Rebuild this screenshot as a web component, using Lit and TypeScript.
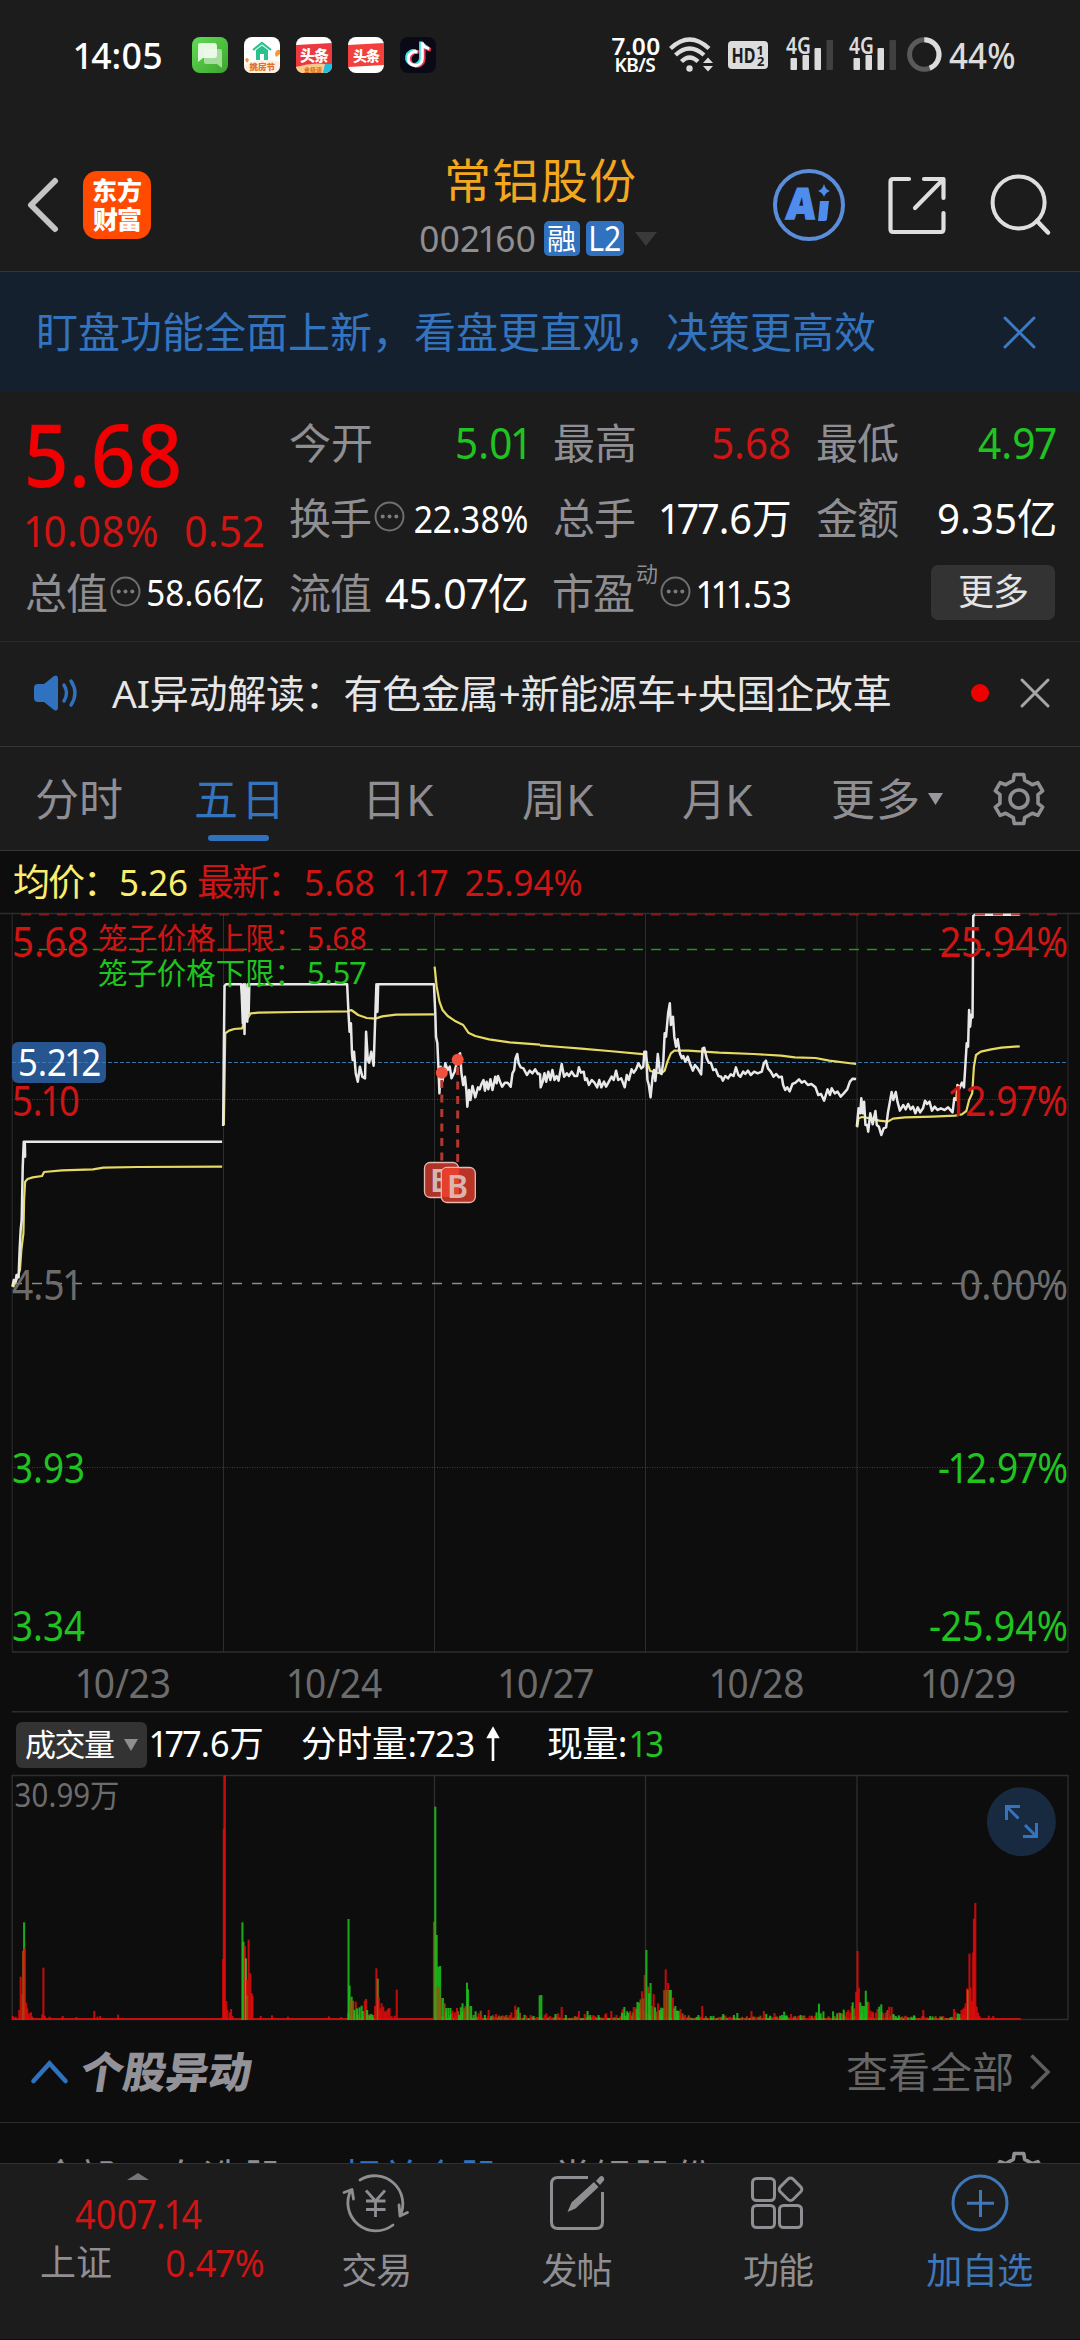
import { LitElement, html, svg, css } from "lit";
import { customElement } from "lit/decorators.js";

const FONT = '"Noto Sans", "Noto Sans CJK SC", sans-serif';

/* label whose visible glyphs span exactly `w` pixels */
const fit = (text: string, w: number, cls = "") => html`<span class="fit ${cls}" data-w=${w}>${text}</span>`;

function gearPath(cx: number, cy: number, ro: number, ri: number) {
  const p: string[] = [];
  const at = (r: number, deg: number) => {
    const a = (deg * Math.PI) / 180;
    return `${(cx + r * Math.cos(a)).toFixed(2)} ${(cy + r * Math.sin(a)).toFixed(2)}`;
  };
  for (let k = 0; k < 6; k++) {
    const a = -90 + k * 60;
    p.push(`${k ? "L" : "M"}${at(ri, a - 17)}L${at(ro, a - 11)}L${at(ro, a + 11)}L${at(ri, a + 17)}Q${at(ri * 0.98, a + 30)} ${at(ri, a + 43)}`);
  }
  return p.join("") + "Z";
}

const gear = svg`<path d=${gearPath(27, 27, 25, 19.5)} fill="none" stroke="#8e8e93" stroke-width="3.6" stroke-linejoin="round"/>
  <circle cx="27" cy="27" r="9" fill="none" stroke="#8e8e93" stroke-width="3.6"/>`;

/* price traces; each panel covers half of the chart width */
const PRICE_L = [
  "36,1220 40,1200 45,1205 48,1185 54,1192 57,1110 60,1050 63,1020 66,860 69,785 73,830 72,785 645,785",
  "648,738 650,500 652,318 656,313 700,313 702,345 705,430 707,313 710,462 712,313 715,390 718,425 720,313 722,400 724,313 1008,313 1012,400 1015,455 1019,430 1022,520 1024,540 1028,515 1033,580 1039,605 1045,560 1052,590 1060,595 1063,455 1068,540 1072,548 1078,515 1082,540 1085,557 1090,400 1093,313 1096,395 1098,313 1101,313 1260,313 1264,400 1266,470 1270,490 1273,560 1276,640 1280,560 1285,603 1293,550 1300,570 1306,560 1311,595 1320,575 1326,550 1330,528 1336,520 1340,580 1345,615 1350,590 1354,630 1357,680 1362,630 1366,660 1372,618 1380,652 1388,622 1393,628 1398,612 1404,600 1408,632 1413,605 1418,628 1424,598 1430,630 1438,590 1442,610 1446,588 1452,605 1458,620 1466,608 1474,608 1483,620 1488,580 1493,570 1497,535 1502,522 1506,550 1512,562 1520,565 1530,585 1538,572 1546,580 1554,568 1562,582 1568,580",
];
const AVG_L = [
  "38,1222 48,1200 58,1170 62,1110 68,1060 70,960 73,905 80,897 95,892 122,888 128,876 180,871 270,868 300,863 400,861 645,860",
  "650,735 654,460 665,452 680,447 703,445 708,430 716,420 728,400 750,398 860,396 1010,394 1020,390 1040,405 1065,414 1090,416 1110,409 1150,404 1260,403",
  "1262,260 1268,320 1276,365 1285,390 1300,408 1320,422 1345,435 1360,458 1380,468 1420,478 1480,487 1568,494",
];
const PRICE_R = [
  "0,580 2,622 8,605 13,580 18,605 24,575 30,600 36,570 42,600 48,588 54,602 63,552 70,590 78,580 84,588 92,575 100,588 108,588 113,562 119,578 127,575 131,600 136,595 142,615 150,600 158,608 166,622 172,600 178,622 186,605 192,620 200,605 208,590 214,600 221,572 227,600 236,595 246,622 252,585 258,600 266,568 272,578 279,568 286,550 294,565 300,560 303,515 308,515 312,600 316,615 321,652 327,590 331,570 335,603 339,560 342,522 348,575 353,582 358,545 362,460 366,470 372,400 377,370 380,435 386,410 390,470 395,500 400,478 406,520 412,535 416,528 422,545 429,530 436,552 444,572 450,555 458,565 468,583 472,505 477,503 484,535 490,548 496,548 503,570 510,568 518,588 526,590 531,602 538,588 546,595 554,583 562,588 569,562 576,585 582,590 590,575 596,582 604,572 612,585 622,575 632,580 644,575 650,550 656,542 662,565 670,575 678,590 686,582 694,592 702,590 706,615 712,630 718,622 725,634 733,612 742,608 752,598 760,608 768,603 778,615 788,612 800,622 808,645 816,642 825,662 835,628 842,645 847,625 856,640 864,635 873,650 882,640 892,628 900,605 908,596 918,597",
  "920,740 925,685 930,700 933,655 937,700 941,665 945,735 950,735 953,755 959,700 966,733 974,693 978,735 984,740 991,765 998,745 1005,742 1010,700 1016,665 1021,636 1026,660 1033,636 1038,665 1045,692 1055,675 1062,688 1069,672 1076,688 1083,680 1090,700 1097,682 1104,697 1112,685 1118,662 1124,672 1131,665 1138,692 1146,680 1154,690 1164,685 1175,690 1185,682 1198,697 1203,655 1209,660 1212,615 1218,625 1225,608 1231,622 1234,575 1239,490 1243,500 1246,390 1249,440 1252,405 1256,412 1258,108 1264,104 1393,104",
];
const AVG_R = [
  "0,496 60,501 120,506 200,513 306,523 312,550 320,573 340,578 352,580 362,572 370,545 380,520 390,512 430,512 520,518 620,522 700,527 740,532 800,534 840,542 918,552",
  "921,742 925,715 935,711 960,715 985,722 1010,725 1025,716 1060,712 1140,710 1205,707 1225,703 1238,693 1246,660 1255,640 1260,560 1266,525 1280,515 1310,508 1340,503 1393,499",
];

type Bar = [number, number, string];
const R = "#e00c0c", G = "#1cc41c", M = "#8f5a10";
const VOL_L: Bar[] = [
  [60, 650, R], [64, 702, R], [70, 487, G], [67, 573, "#a04a10"], [72, 565, R], [76, 728, R], [79, 745, R], [84, 760, R], [90, 757, R], [94, 770, R], [37, 768, R], [45, 770, R], [56, 750, R],
  [126, 623, R], [123, 763, R], [130, 767, R], [144, 770, R], [182, 768, R], [222, 771, R], [274, 753, R], [283, 770, R], [291, 768, R], [343, 764, R],
  [648, 597, R], [650, 206, R], [653, 46, R], [657, 723, R], [660, 750, R], [667, 757, R], [671, 747, R], [675, 768, R],
  [704, 487, G], [707, 545, G], [711, 558, R], [714, 595, "#5fae3a"], [717, 660, R], [718, 706, "#6a7a10"], [722, 539, R], [727, 640, R], [731, 700, R], [733, 708, R],
  [757, 768, R], [790, 766, R], [836, 770, R], [955, 769, R], [991, 771, R],
  [1012, 477, G], [1015, 677, G], [1021, 710, G], [1018, 722, M], [1025, 722, M], [1033, 725, R], [1029, 750, G], [1037, 745, G], [1044, 742, G], [1050, 737, G], [1054, 753, G], [1059, 722, R], [1063, 717, R], [1066, 750, G], [1073, 766, G],
  [1089, 738, R], [1093, 625, R], [1097, 656, "#6a8a18"], [1100, 712, R], [1104, 745, R], [1108, 730, R], [1113, 740, R], [1118, 755, R], [1122, 752, R], [1127, 746, R], [1131, 744, R], [1137, 768, R], [1146, 767, R], [1152, 689, R],
  [1260, 485, "#a03a10"], [1264, 140, G], [1268, 525, G], [1273, 620, G], [1278, 618, G], [1270, 680, M], [1275, 682, M], [1280, 714, M], [1286, 714, G], [1291, 730, M], [1296, 744, G], [1302, 744, G], [1308, 744, G], [1314, 752, R], [1321, 757, R], [1327, 744, R], [1333, 765, G], [1338, 742, G], [1343, 730, G], [1347, 745, M], [1356, 668, G], [1359, 688, G], [1352, 738, M], [1363, 738, M], [1368, 738, G], [1375, 765, G], [1381, 754, G], [1390, 760, R], [1397, 765, R], [1408, 765, G], [1419, 750, R], [1440, 762, R], [1480, 765, R], [1485, 757, R], [1496, 737, R], [1500, 750, M], [1505, 742, G], [1510, 758, M], [1541, 765, R], [1567, 706, G],
];
const VOL_R: Bar[] = [
  [4, 705, G], [18, 760, R], [30, 768, R], [45, 762, G], [52, 760, R], [63, 741, R], [75, 765, G], [113, 753, R], [130, 762, R], [138, 753, G], [146, 765, G], [170, 765, G], [192, 760, R], [207, 753, R], [222, 765, R], [238, 758, G], [245, 741, G], [255, 759, G], [262, 757, R],
  [272, 741, R], [277, 742, R], [283, 726, G], [288, 728, G], [292, 718, M], [296, 694, R], [300, 715, M], [304, 645, "#8a3a10"], [309, 570, G], [314, 680, "#9a4a10"], [321, 669, G], [317, 700, G], [325, 738, M], [330, 702, R], [334, 742, G], [339, 755, M], [343, 730, R], [348, 750, G], [352, 743, G], [356, 745, G], [361, 690, M], [365, 628, R], [368, 690, M], [372, 669, R], [376, 690, G], [380, 690, G], [386, 713, R], [389, 745, M], [393, 738, G], [398, 752, G], [403, 753, G], [408, 747, R], [414, 760, M], [421, 765, R], [432, 766, M],
  [460, 765, G], [471, 738, R], [496, 768, G], [532, 762, G], [563, 765, G], [573, 759, G], [614, 753, R], [650, 753, R], [657, 762, G], [668, 767, G], [681, 759, R], [703, 765, G], [709, 755, G], [716, 766, G], [729, 762, R], [757, 765, G], [783, 767, R], [803, 757, G], [810, 731, G], [815, 760, G], [823, 754, G], [851, 754, G], [863, 760, G], [872, 759, G], [882, 749, G], [890, 756, R], [895, 750, R], [901, 757, R], [905, 738, R], [908, 727, G], [912, 745, M],
  [918, 695, R], [922, 573, R], [926, 683, R], [930, 727, G], [935, 738, G], [941, 738, G], [946, 692, G], [950, 725, G], [954, 727, R], [960, 752, R], [966, 755, R], [975, 758, R], [980, 747, R], [985, 740, G], [991, 733, G], [997, 760, R], [1004, 757, R], [1009, 750, M], [1014, 740, R], [1021, 741, R], [1026, 762, G], [1033, 768, G], [1042, 766, G], [1062, 767, R], [1086, 766, G], [1113, 750, R], [1133, 768, G], [1166, 770, G],
  [1202, 747, R], [1206, 756, R], [1213, 760, G], [1218, 762, G], [1224, 750, R], [1229, 746, R], [1233, 742, R], [1236, 730, R], [1240, 685, R], [1243, 690, "#7a8a18"], [1247, 581, R], [1250, 683, R], [1254, 722, R], [1258, 577, R], [1260, 476, R], [1264, 429, R], [1268, 740, R], [1272, 758, R], [1276, 768, R], [1303, 767, R], [1316, 768, R],
];

/* low trading-volume floor: short bars between the peaks */
function floorBars(x0: number, x1: number, max: number, palette: string[]): Bar[] {
  const out: Bar[] = [];
  let s = x0 * 7 + 13;
  for (let x = x0; x < x1; x += 4.4) {
    s = (s * 1103515245 + 12345) % 2147483648;
    const a = s / 2147483648;
    s = (s * 1103515245 + 12345) % 2147483648;
    out.push([x, 776 - a * a * max, palette[Math.floor((s / 2147483648) * palette.length)]]);
  }
  return out;
}
const mix = [R, G, M, M];
const FLOOR_L = [...floorBars(1012, 1088, 22, mix), ...floorBars(1264, 1400, 24, mix), ...floorBars(1400, 1568, 12, mix)];
const FLOOR_R = [...floorBars(0, 240, 13, mix), ...floorBars(240, 310, 30, mix), ...floorBars(310, 420, 32, mix), ...floorBars(420, 860, 10, mix), ...floorBars(860, 1030, 20, mix), ...floorBars(1030, 1200, 8, mix), ...floorBars(1200, 1240, 20, mix)];

const bars = (list: Bar[]) => list.map(([x, y, c]) => svg`<rect x=${x - 3} y=${y} width="6" height=${780 - y} fill=${c} fill-opacity="0.86"/>`);
const lines = (list: string[], color: string, width: number) => list.map((p) => svg`<polyline points=${p} fill="none" stroke=${color} stroke-width=${width} stroke-linejoin="round" vector-effect="non-scaling-stroke"/>`);
const label = (x: number, y: number, size: number, len: number, fill: string, text: string, end = false) =>
  svg`<text x=${x} y=${y} font-size=${size} textLength=${len} lengthAdjust="spacingAndGlyphs" text-anchor=${end ? "end" : "start"} fill=${fill}>${text}</text>`;

const RED = "#cf1414", GREEN = "#20c420", DIM = "#6c6c6c";

const dots = html`<svg class="dots" width="31" height="31" viewBox="0 0 31 31"><circle cx="15.5" cy="15.5" r="14" fill="none" stroke="#6f6f72" stroke-width="2"/>
  <g fill="#7c7c80"><circle cx="8.7" cy="15.5" r="2"/><circle cx="15.5" cy="15.5" r="2"/><circle cx="22.3" cy="15.5" r="2"/></g></svg>`;

const signal = html`<svg width="48" height="36" viewBox="787 37 48 36"><text x="786" y="54" font-size="22.500" font-weight="600" textLength="25" lengthAdjust="spacingAndGlyphs" fill="#dcdcdc">4G</text>
  <g fill="#dcdcdc"><rect x="790.500" y="58" width="6.500" height="12" rx="1"/><rect x="802.500" y="55" width="6.500" height="15" rx="1"/><rect x="814.500" y="48" width="6.500" height="22" rx="1"/></g><rect x="826.500" y="40" width="6.500" height="30" rx="1" fill="#404040"/></svg>`;

@customElement("app-root")
export class AppRoot extends LitElement {
  static styles = css`
    :host { display: block; width: 1080px; height: 2340px; overflow: hidden; background: #0d0d0d; color: #fff;
      font-family: "Noto Sans", "Noto Sans CJK SC", sans-serif; font-variant-numeric: proportional-nums; }
    * { box-sizing: border-box; }
    svg { display: block; overflow: visible; flex: none; }
    text { white-space: pre; }
    .fit { display: inline-block; flex: none; justify-self: start; width: max-content; white-space: pre; line-height: 1.4; transform-origin: 0 50%; }
    .red { color: #cf1414; } .green { color: #20c420; } .grey { color: #8e8e93; } .blue { color: #3473bd; }
    .top { background: #1c1c1c; }
    .s22 { font-size: 22px; } .s35 { font-size: 35px; } .s36 { font-size: 36px; } .s37 { font-size: 37px; } .s38 { font-size: 38px; }
    .s39 { font-size: 39px; } .s40 { font-size: 40px; } .s42 { font-size: 42px; } .s43 { font-size: 43px; } .s44 { font-size: 44px; }

    .status { display: grid; grid-template-columns: 117px 419px 58px 59px 59px 63px 58px 41px auto; align-items: center;
      height: 110px; margin-bottom: 28px; padding-left: 75px; justify-content: start; }
    .clock { font-size: 37px; font-weight: 500; }
    .apps { display: flex; gap: 16px; }
    .net { display: flex; flex-direction: column; align-items: center; width: 49px; font-weight: 600; }
    .net .a { font-size: 24px; line-height: 20px; } .net .b { font-size: 19px; line-height: 18px; }
    .batt { font-size: 37px; font-weight: 500; color: #dcdcdc; }

    .header { display: grid; grid-template-columns: 55px 337px 354px 114px 103px auto; justify-content: start; align-items: center;
      height: 133px; padding-left: 28px; }
    .logo { display: flex; flex-direction: column; align-items: center; justify-content: center; width: 68px; height: 68px; border-radius: 14px;
      background: #ff4a00; font-weight: 800; font-size: 25px; }
    .logo .fit { line-height: 29px; }
    .name { display: flex; flex-direction: column; width: 240px; align-items: center; padding-bottom: 2px; }
    .name .fit.title { font-size: 47px; line-height: 58px; color: #f3a71d; margin-left: 3px; }
    .code { display: flex; align-items: center; height: 35px; margin-top: 12px; width: 240px; }
    .code .fit { line-height: 35px; }
    .badge { display: flex; align-items: center; justify-content: center; height: 35px; border-radius: 5px; background: #3072bf; width: 36px; margin-left: 9px; font-size: 29px; }
    .badge.l2 { width: 38px; margin-left: 6px; font-size: 34px; }
    .drop { margin-left: 11px; }

    .banner { display: flex; align-items: center; justify-content: space-between; height: 121px; padding: 1px 44px 0 39px; border-top: 1px solid #343434; background: #15202e; }

    .quote { display: grid; grid-template-columns: 237px 237px 236px 238px; column-gap: 27px; height: 250px; padding: 14px 0 0 26px; border-bottom: 1px solid #2a2a2a; }
    .col { display: flex; flex-direction: column; }
    .cell { display: flex; align-items: center; height: 75px; }
    .sp { flex: 1; }
    .big { display: flex; align-items: center; height: 100px; padding: 0 0 6px 2px; }
    .price { font-size: 87px; font-weight: 500; color: #f00000; line-height: 94px; }
    .chg { display: flex; justify-content: space-between; align-items: center; height: 50px; }
    .dots { margin: -4px 0 0 3px; }
    .sup { align-self: flex-start; margin-top: 2px; margin-left: 3px; }
    .sup + .dots { margin-left: 2px; }
    .more { display: flex; align-items: center; justify-content: center; width: 124px; height: 55px; margin: -2px 0 0 auto; border-radius: 7px; background: #333; color: #e4e4e4; }

    .notice { display: grid; grid-template-columns: 78px 859px 49px auto; align-items: center; justify-content: start; height: 105px; padding: 0 0 2px 34px; border-bottom: 1px solid #363636; color: #e6e6e6; }
    .dot { width: 18px; height: 18px; border-radius: 50%; background: #ee0000; }

    .tabs { display: grid; grid-template-columns: 160px 173px 154px 160px 150px 159px auto; align-items: center; justify-content: start; height: 104px; padding: 0 0 0 36px; border-bottom: 1px solid #363636; color: #8e8e93; }
    .tab { position: relative; display: flex; align-items: center; padding-top: 3px; }
    .tab.on { color: #3473bd; }
    .tab.on::after { content: ""; position: absolute; left: 12px; top: 69px; width: 61px; height: 6px; border-radius: 3px; background: #3072c0; }
    .caret { margin: -3px 0 0 10px; }

    .legend { display: grid; grid-template-columns: 107px 77px 108px 88px 72px auto; align-items: center; height: 62px; padding: 0 0 0 14px; justify-content: start; }
    .yellow { color: #fbee6e; }
    .volhead { display: grid; grid-template-columns: 135px 151px 185px 61px 83px auto; align-items: center; justify-content: start; height: 61px; padding-left: 16px; }
    .pick { display: flex; align-items: center; width: 131px; height: 46px; border-radius: 6px; background: #333; padding-left: 10px; font-size: 31px; }
    .pick svg { margin-left: 10px; }

    .sect { display: grid; grid-template-columns: 50px 766px 183px auto; align-items: center; justify-content: start; height: 103px; padding: 2px 0 0 31px; border-bottom: 1px solid #2a2a2a; }
    .slantbox { transform: skewX(-9deg); width: 170px; }
    .slant { font-size: 43px; font-weight: 900; color: #929298; }
    .dim { color: #666; }
    .feed { display: grid; grid-template-columns: 126px 175px 213px 437px auto; justify-content: start; height: 40px; padding: 31px 0 0 42px; overflow: hidden; font-size: 39px; color: #8e8e93; }
    .feed .fit { line-height: 46px; }

    .nav { display: grid; grid-template-columns: 275px repeat(4, 201.400px); height: 176px; border-top: 1px solid #303030; background: #1c1c1c; color: #8e8e93; }
    .index { padding-top: 9px; display: flex; flex-direction: column; }
    .index svg { margin-left: 127px; }
    .index .v { margin: 6px 0 0 75px; height: 56px; }
    .index .r { display: flex; justify-content: space-between; align-items: center; height: 42px; margin: 0 12px 0 41px; }
    .item { display: flex; flex-direction: column; align-items: center; padding-top: 7px; }
    .item .fit { margin-top: 11px; line-height: 54px; }
    .item.on { color: #3f77b8; }
  `;

  firstUpdated() {
    const ctx = document.createElement("canvas").getContext("2d")!;
    this.renderRoot.querySelectorAll<HTMLElement>(".fit").forEach((el) => {
      const cs = getComputedStyle(el);
      const em = parseFloat(cs.fontSize);
      ctx.font = `${cs.fontWeight} ${cs.fontSize} ${FONT}`;
      const text = el.textContent ?? "";
      const chars = [...text];
      const adv = el.offsetWidth;
      const first = ctx.measureText(chars[0]);
      const last = ctx.measureText(chars[chars.length - 1]);
      /* the proportional "1" has tighter side bearings than the tabular one */
      const lead = chars[0] === "1" ? em * 0.01 : -first.actualBoundingBoxLeft;
      const trail = text.endsWith("1") ? em * 0.08 : last.width - last.actualBoundingBoxRight;
      const target = Number(el.dataset.w);
      const ink = adv - lead - trail;
      el.style.width = `${target}px`;
      el.style.textIndent = `${(-lead).toFixed(2)}px`;
      if (/[0-9]/.test(text)) {
        el.style.transform = `scaleX(${(target / ink).toFixed(4)})`;
      } else if (chars.length > 1) {
        el.style.letterSpacing = `${((target - ink) / (chars.length - 1)).toFixed(3)}px`;
      }
    });
  }

  render() {
    return html`
      <div class="top">
        <div class="status">
          ${fit("14:05", 87, "clock")}
          <div class="apps">
            <svg width="36" height="36" viewBox="0 0 36 36"><defs><linearGradient id="gm" x1="0" y1="0" x2="1" y2="1"><stop offset="0" stop-color="#62dc55"/><stop offset="1" stop-color="#3ba52c"/></linearGradient></defs><rect width="36" height="36" rx="8" fill="url(#gm)"/><path d="M14 12h14q2 0 2 2v17l-5-4H14q-2 0-2-2V14q0-2 2-2Z" fill="#a5dd9d"/><path d="M8 6h14q3 0 3 3v9q0 3-3 3H11l-5 4V8q0-2 2-2Z" fill="#f0fbee" fill-opacity=".93"/></svg>
            <svg width="36" height="36" viewBox="0 0 36 36"><rect width="36" height="36" rx="8" fill="#fff"/><path d="M0 28q18-8 36-3v3q0 8-8 8H8q-8 0-8-8Z" fill="#fdeedd"/><path d="M9 13 18 6l9 7" fill="none" stroke="#2cc08d" stroke-width="2.200"/><path d="M12 13v10h4v-6h4v6h4V13l-6-4.500Z" fill="#2cc08d"/><path d="M31 17q1-5 5-4v4l-4 3ZM1 23q2-4 4 0l-2 3Z" fill="#ee9a3a"/><text x="5.500" y="33" font-size="8.500" font-weight="800" fill="#e0702c">挑房节</text></svg>
            <svg width="36" height="36" viewBox="0 0 36 36"><rect width="36" height="36" rx="8" fill="#fff"/><path d="M0 8 36 6v22L0 30Z" fill="#ea3a40"/><path d="M0 30q18-6 36-2 0 8-8 8H8q-7 0-8-6Z" fill="#fcc98a"/><path d="M29 27h7q1 9-9 9Z" fill="#20bde0"/><text x="4" y="24" font-size="15" font-weight="900" textLength="29" fill="#fff">头条</text><text x="8" y="35" font-size="6" font-weight="700" fill="#d07020">金极速</text></svg>
            <svg width="36" height="36" viewBox="0 0 36 36"><rect width="36" height="36" rx="8" fill="#fff"/><path d="M0 8 36 6v22L0 30Z" fill="#f2403c"/><text x="5" y="24" font-size="14" font-weight="800" textLength="27" fill="#fff">头条</text></svg>
            <svg width="36" height="36" viewBox="0 0 36 36"><rect width="36" height="36" rx="8" fill="#090a16"/><g fill="none" stroke-width="3.500"><path d="M18 14.500a7 7 0 1 0 5 7V6q1 5 7 6" stroke="#ef3a56" transform="translate(.800 .800)"/><path d="M17 14.500a7 7 0 1 0 5 7V5q1 5 7 6" stroke="#3ae2e4" transform="translate(-1.200 -.500)"/><path d="M17.500 15a7 7 0 1 0 4.800 6.500V5.500q1 5 7 6" stroke="#fff" stroke-width="3"/></g></svg>
          </div>
          <div class="net">${fit("7.00", 48, "a")}${fit("KB/S", 40, "b")}</div>
          <svg width="45" height="36" viewBox="0 0 45 36"><g fill="none" stroke="#dcdcdc" stroke-width="4.300"><path d="M1.500 11.500Q20.500-6.500 40 11.500"/><path d="M6.500 18Q20.500 5 35 18"/><path d="M12.500 24.500Q20.500 16.500 29 24.500"/></g><circle cx="20.500" cy="31.500" r="3.200" fill="#dcdcdc"/><path d="M34 26 39 20.500 44 26ZM34 29h10L39 34.500Z" fill="#dcdcdc"/></svg>
          <svg width="40" height="28" viewBox="0 0 40 28"><rect width="40" height="28" rx="4" fill="#dcdcdc"/><g fill="#1c1c1c" font-weight="700"><text x="3.500" y="22" font-size="22" textLength="24" lengthAdjust="spacingAndGlyphs">HD</text><text x="29" y="13.500" font-size="13">1</text><text x="29" y="25" font-size="13">2</text></g></svg>
          ${signal}${signal}
          <svg width="35" height="36" viewBox="0 0 35 36"><circle cx="16.300" cy="17.500" r="14.700" fill="none" stroke="#5a5a5a" stroke-width="5"/><path d="M16.300 2.800A14.700 14.700 0 0 1 21.700 31.200" fill="none" stroke="#dcdcdc" stroke-width="5"/></svg>
          ${fit("44%", 65, "batt")}
        </div>
        <div class="header">
          <svg width="30" height="54" viewBox="0 0 30 54"><path d="M27 3 3 27 27 51" fill="none" stroke="#c4c4c4" stroke-width="6" stroke-linecap="round" stroke-linejoin="round"/></svg>
          <div class="logo">${fit("东方", 48)}${fit("财富", 48)}</div>
          <div class="name">
            ${fit("常铝股份", 187, "title")}
            <div class="code">${fit("002160", 115, "grey s36")}<span class="badge">${fit("融", 28)}</span><span class="badge l2">${fit("L2", 29)}</span>
              <svg class="drop" width="22" height="14" viewBox="0 0 22 14"><path d="M0 0h22L11 14Z" fill="#3a3a3a"/></svg></div>
          </div>
          <svg width="72" height="74" viewBox="0 0 72 74"><circle cx="35" cy="37" r="34" fill="none" stroke="#5a8edb" stroke-width="4"/><g fill="#4f8cec" stroke="#4f8cec" font-weight="900" transform="translate(11.500 51) skewX(-5)"><text x="0" y="0" font-size="43" textLength="29" lengthAdjust="spacingAndGlyphs" stroke-width="1.500">A</text></g><path d="M46 33h9l-2 18q-.300 2-2 2h-7Z" fill="#4f8cec"/><path d="M50 16Q51.500 21.500 56 23 51.500 24.500 50 29 48.500 24.500 44 23 48.500 21.500 50 16Z" fill="#4f8cec"/></svg>
          <svg width="58" height="58" viewBox="0 0 58 58"><path d="M21 3H5Q2.500 3 2.500 6V53Q2.500 56 5 56H53Q55.500 56 55.500 53V37M36 3H55.500V22M55 3.500 27 32" fill="none" stroke="#dedede" stroke-width="4.200" stroke-linecap="round" stroke-linejoin="round"/></svg>
          <svg width="60" height="60" viewBox="0 0 60 60"><circle cx="27.600" cy="27.500" r="26" fill="none" stroke="#dedede" stroke-width="4"/><path d="M46 46 57 57.500" stroke="#dedede" stroke-width="4.500" stroke-linecap="round"/></svg>
        </div>
      </div>
      <div class="banner">${fit("盯盘功能全面上新，看盘更直观，决策更高效", 836, "s42 blue")}
        <svg width="33" height="33" viewBox="0 0 33 33"><path d="M2 2 31 31M31 2 2 31" stroke="#3c7ac4" stroke-width="3" stroke-linecap="round"/></svg></div>
      <div class="top">
        <div class="quote">
          <div class="col"><div class="big">${fit("5.68", 152, "price")}</div><div class="chg">${fit("10.08%", 131, "s43 red")}${fit("0.52", 77, "s43 red")}</div>
            <div class="cell">${fit("总值", 81, "s42 grey")}${dots}<i class="sp"></i>${fit("58.66亿", 115, "s36")}</div></div>
          <div class="col"><div class="cell">${fit("今开", 81, "s42 grey")}<i class="sp"></i>${fit("5.01", 70, "s43 green")}</div>
            <div class="cell">${fit("换手", 81, "s42 grey")}${dots}<i class="sp"></i>${fit("22.38%", 112, "s38")}</div>
            <div class="cell">${fit("流值", 81, "s42 grey")}<i class="sp"></i>${fit("45.07亿", 142, "s42")}</div></div>
          <div class="col"><div class="cell">${fit("最高", 81, "s42 grey")}<i class="sp"></i>${fit("5.68", 77, "s43 red")}</div>
            <div class="cell">${fit("总手", 81, "s42 grey")}<i class="sp"></i>${fit("177.6万", 129, "s42")}</div>
            <div class="cell">${fit("市盈", 80, "s42 grey")}${fit("动", 21, "s22 grey sup")}${dots}<i class="sp"></i>${fit("111.53", 92, "s38")}</div></div>
          <div class="col"><div class="cell">${fit("最低", 81, "s42 grey")}<i class="sp"></i>${fit("4.97", 77, "s43 green")}</div>
            <div class="cell">${fit("金额", 81, "s42 grey")}<i class="sp"></i>${fit("9.35亿", 116, "s42")}</div>
            <div class="cell"><span class="more">${fit("更多", 68, "s36")}</span></div></div>
        </div>
        <div class="notice">
          <svg width="44" height="36" viewBox="0 0 44 36"><path d="M4 9h6L20 1q4-2 4 3v28q0 5-4 3L10 27H4q-4 0-4-4V13q0-4 4-4Z" fill="#3072c0"/><path d="M30 10q5 8 0 16M37 6q8 12 0 24" fill="none" stroke="#3072c0" stroke-width="3.400" stroke-linecap="round"/></svg>
          ${fit("AI异动解读：有色金属+新能源车+央国企改革", 778, "s39")}
          <span class="dot"></span>
          <svg width="30" height="30" viewBox="0 0 30 30"><path d="M2 2 28 28M28 2 2 28" stroke="#a6a6a6" stroke-width="3" stroke-linecap="round"/></svg>
        </div>
        <div class="tabs">
          <div class="tab">${fit("分时", 86, "s44")}</div><div class="tab on">${fit("五日", 82, "s44")}</div><div class="tab">${fit("日K", 65, "s44")}</div><div class="tab">${fit("周K", 71, "s44")}</div><div class="tab">${fit("月K", 70, "s44")}</div>
          <div class="tab">${fit("更多", 85, "s44")}<svg class="caret" width="15" height="12" viewBox="0 0 15 12"><path d="M0 0h15L7.500 12Z" fill="#98989c"/></svg></div>
          <svg width="54" height="54" viewBox="0 0 54 54">${gear}</svg>
        </div>
      </div>
      <div class="legend s37 red">${fit("均价：", 82, "yellow")}${fit("5.26", 66, "yellow")}${fit("最新：", 82)}${fit("5.68", 68)}${fit("1.17", 52)}${fit("25.94%", 115)}</div>
      <svg width="1080" height="801" viewBox="0 913 1080 801">
        <g stroke="#2e2e2e">
          <path d="M0 913.500H1080M12 1652H1068M12 1711.700H1068" stroke-width="1.600"/>
          <path d="M12.200 914V1652M1068 914V1652M223.500 914V1652M434.500 914V1652M645.500 914V1652M857 914V1652"/>
          <path d="M12 1099.500H1068M12 1467.500H1068" stroke-dasharray="1 1.500" stroke="#404040"/>
        </g>
        <path d="M21 949.500H1060" stroke="#2a8f2a" stroke-width="1.600" stroke-dasharray="10 8"/>
        <path d="M12 1283.500H1064" stroke="#8a8a8a" stroke-width="1.600" stroke-dasharray="10 10"/>
        <path d="M12 1062.500H1066" stroke="#3a74a8" stroke-width="1.200" stroke-dasharray="4 2"/>
        <svg x="0" y="880" width="540" height="440" viewBox="0 0 1568 1320" preserveAspectRatio="none">${lines(AVG_L, "#e6da62", 2.2)}${lines(PRICE_L, "#e8e8e8", 2.5)}</svg>
        <svg x="540" y="880" width="540" height="440" viewBox="0 0 1568 1320" preserveAspectRatio="none">${lines(AVG_R, "#e6da62", 2.2)}${lines(PRICE_R, "#e8e8e8", 2.5)}</svg>
        <path d="M21 914.500H1058" stroke="#9a1c1c" stroke-opacity=".82" stroke-width="2" stroke-dasharray="10 8"/>
        ${label(12, 957, 41, 77, RED, "5.68")}${label(12, 1116, 41, 68, RED, "5.10")}${label(12, 1300, 41, 69, DIM, "4.51")}${label(12, 1483, 41, 73, GREEN, "3.93")}${label(12, 1641, 41, 73, GREEN, "3.34")}
        ${label(1068, 957, 41, 128, RED, "25.94%", true)}${label(1068, 1116, 41, 119, RED, "12.97%", true)}${label(1068, 1300, 41, 109, DIM, "0.00%", true)}${label(1068, 1483, 41, 130, GREEN, "-12.97%", true)}${label(1068, 1641, 41, 139, GREEN, "-25.94%", true)}
        ${label(98, 949, 30, 206, RED, "笼子价格上限：")}${label(307, 949, 30.5, 60, RED, "5.68")}
        ${label(98, 984, 30, 206, GREEN, "笼子价格下限：")}${label(307, 984, 30.5, 59, GREEN, "5.57")}
        <rect x="12" y="1042" width="94" height="41" rx="6" fill="#27558f"/><path d="M12 1062.500H106" stroke="#3a78b4" stroke-width="1.200" stroke-dasharray="4 2"/>
        ${label(18, 1075.7, 38, 83, "#fff", "5.212")}
        <path d="M441.800 1080V1163M457.700 1067V1168" stroke="#b03a30" stroke-width="3" stroke-dasharray="8 6.500"/>
        <circle cx="441.800" cy="1072.700" r="6" fill="#f0503c"/><circle cx="457.700" cy="1059.700" r="6" fill="#f0503c"/>
        <rect x="424.500" y="1162.500" width="34" height="35" rx="5.500" fill="#ae3428" stroke="#e6b8b2" stroke-width="1.300"/><text x="430" y="1192" font-size="32" font-weight="600" fill="#d0b8b5">B</text>
        <rect x="441.300" y="1167.500" width="34" height="35" rx="5.500" fill="#b83426" stroke="#e6b8b2" stroke-width="1.300"/><path d="M442 1173q0-5 5-5H459V1197H442Z" fill="#e6402c"/><text x="447" y="1197.500" font-size="32" font-weight="600" fill="#dcb4ae">B</text>
        ${["10/23", "10/24", "10/27", "10/28", "10/29"].map((d, i) => label(77 + i * 211.3, 1698, 40, 94, DIM, d))}
      </svg>
      <div class="volhead s36"><div class="pick">${fit("成交量", 88)}<svg width="14" height="12" viewBox="0 0 14 12"><path d="M0 0h14L7 12Z" fill="#8e8e93"/></svg></div>
        ${fit("177.6万", 111)}${fit("分时量:723", 172)}<svg width="12" height="33" viewBox="0 0 12 33"><path d="M6 33V6M1.500 9 6 1l4.500 8Z" stroke="#fff" stroke-width="2.600" fill="#fff"/></svg>${fit("现量:", 78)}${fit("13", 31, "green")}</div>
      <svg width="1080" height="245" viewBox="0 1775 1080 245">
        <path d="M12.200 2019.500V1775.500H1068V2019.500ZM223.500 1776V2019M434.500 1776V2019M645.500 1776V2019M857 1776V2019" fill="none" stroke="#2e2e2e" stroke-width="1.300"/>
        ${label(14.5, 1807, 32, 105, DIM, "30.99万")}
        <svg x="0" y="1760" width="540" height="280" viewBox="0 0 1568 840" preserveAspectRatio="none"><rect x="36" y="774" width="1532" height="6" fill="#c01010"/>${bars(FLOOR_L)}${bars(VOL_L)}</svg>
        <svg x="540" y="1760" width="540" height="280" viewBox="0 0 1568 840" preserveAspectRatio="none"><rect x="0" y="774" width="1396" height="6" fill="#c01010"/>${bars(FLOOR_R)}${bars(VOL_R)}</svg>
        <circle cx="1021.400" cy="1821.700" r="34.500" fill="#182a40"/>
        <path d="M1006.500 1820V1806.500H1020M1007 1807 1018.500 1818.500M1036.500 1823V1836.500H1023M1036 1836 1025 1825" fill="none" stroke="#3473bd" stroke-width="3"/>
      </svg>
      <div class="sect">
        <svg width="37" height="24" viewBox="0 0 37 24"><path d="M2.500 21 18.500 3.500 34.500 21" fill="none" stroke="#2f72bd" stroke-width="4.600" stroke-linecap="round"/></svg>
        <div class="slantbox">${fit("个股异动", 170, "slant")}</div>${fit("查看全部", 165, "s42 dim")}
        <svg width="20" height="36" viewBox="0 0 20 36"><path d="M1.500 1.500 18 18 1.500 34.500" fill="none" stroke="#5e5e5e" stroke-width="3.600"/></svg>
      </div>
      <div class="feed">${fit("全部", 71)}${fit("自选股", 114)}${fit("相关个股", 155, "blue")}${fit("常铝股份", 156)}<svg width="54" height="54" viewBox="1 3 54 54">${gear}</svg></div>
      <div class="nav">
        <div class="index"><svg width="22" height="7" viewBox="0 0 22 7"><path d="M0 7 11 0 22 7Z" fill="#76767a"/></svg>
          <div class="v">${fit("4007.14", 127, "s40 red")}</div><div class="r">${fit("上证", 70, "s36")}${fit("0.47%", 97, "s38 red")}</div></div>
        <div class="item"><svg width="66" height="62" viewBox="343 2172 66 62"><g fill="none" stroke="#8e8e93" stroke-width="2.800" stroke-linecap="round" stroke-linejoin="round"><path d="M360 2181A28 28 0 0 1 400 2217M400 2217 407.500 2213.500M400 2217 399 2206M393 2226A28 28 0 0 1 351 2191M344 2193.500 352 2190.500 353.500 2200" /><path d="M366 2191.500 375.500 2202 385 2191.500M375.500 2202V2218M366 2202H385.500M366 2210.500H385.500" stroke-linecap="butt"/></g></svg>${fit("交易", 67, "s36")}</div>
        <div class="item"><svg width="56" height="62" viewBox="549 2172 56 62"><path d="M588 2178.500H558Q551.500 2178.500 551.500 2185V2223Q551.500 2229.500 558 2229.500H596Q602.500 2229.500 602.500 2223V2193" fill="none" stroke="#8e8e93" stroke-width="3"/><path d="M567.500 2213 571.500 2203.500 594 2183 598.500 2188 575.500 2209.500ZM596 2182 599.500 2178Q602 2176 603.800 2178.500 605 2180.500 603 2182.500L600 2186Z" fill="#8e8e93"/></svg>${fit("发帖", 69, "s36")}</div>
        <div class="item"><svg width="56" height="62" viewBox="751 2172 56 62"><g fill="none" stroke="#8e8e93" stroke-width="3"><rect x="753.500" y="2179.500" width="22" height="22" rx="4"/><rect x="753.500" y="2206.500" width="22" height="22" rx="4"/><rect x="780.500" y="2206.500" width="22" height="22" rx="4"/><rect x="782.500" y="2181.300" width="18" height="18" rx="3.500" transform="rotate(45 791.500 2190.300)"/></g></svg>${fit("功能", 69, "s36")}</div>
        <div class="item on"><svg width="58" height="62" viewBox="950 2172 58 62"><g fill="none" stroke="#3f77b8" stroke-width="3"><circle cx="979" cy="2204" r="27"/><path d="M966 2204.300H993M979.500 2191V2218"/></g></svg>${fit("加自选", 105, "s36")}</div>
      </div>
    `;
  }
}
